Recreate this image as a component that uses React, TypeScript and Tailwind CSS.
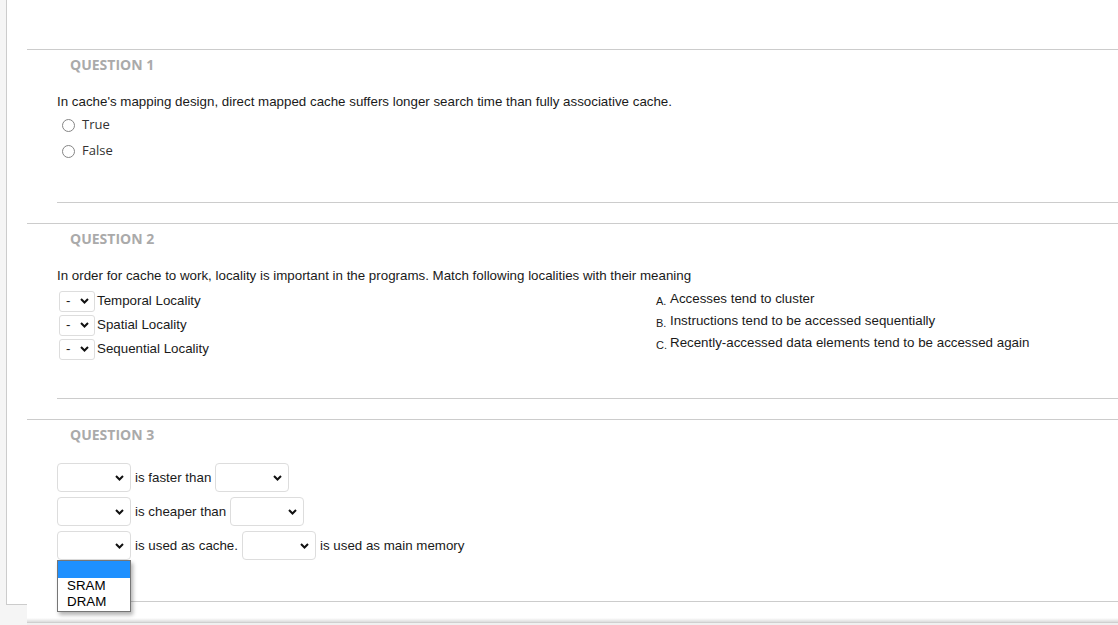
import type { ReactNode } from "react";

const arial = "font-['Liberation_Sans',Arial,sans-serif]";
const openSans = "font-['Open_Sans',sans-serif]";

export default function App() {
  return (
    <div className="flex h-[625px] overflow-hidden bg-[#f5f5f5]">
      <div className="ml-[6px] h-[605px] w-[21px] shrink-0 border-b border-l border-[#cccccc] bg-white" />
      <div className="flex min-w-0 flex-1 flex-col">
        <div className="h-[618px] bg-white pt-[49px]">
          <QuestionBlock title="QUESTION 1" contentClass="pb-[38px]">
            <p className={`mt-[19px] text-[13.33px] leading-[16px] text-[#1a1a1a] ${arial}`}>
              In cache's mapping design, direct mapped cache suffers longer search time than fully associative cache.
            </p>
            <div className="mt-[2px]">
              <Radio label="True" />
              <Radio label="False" />
            </div>
          </QuestionBlock>

          <QuestionBlock title="QUESTION 2" contentClass="pb-[37px]" className="mt-[20px]">
            <p className={`mt-[19px] text-[13.33px] leading-[16px] text-[#1a1a1a] ${arial}`}>
              In order for cache to work, locality is important in the programs. Match following localities with their
              meaning
            </p>
            <div className="mt-[4px] flex">
              <div className="ml-[2px] w-[597px] pt-[1px]">
                <MatchRow label="Temporal Locality" />
                <MatchRow label="Spatial Locality" />
                <MatchRow label="Sequential Locality" />
              </div>
              <div>
                <Answer letter="A." text="Accesses tend to cluster" />
                <Answer letter="B." text="Instructions tend to be accessed sequentially" />
                <Answer letter="C." text="Recently-accessed data elements tend to be accessed again" />
              </div>
            </div>
          </QuestionBlock>

          <QuestionBlock title="QUESTION 3" contentClass="pb-[41px]" className="mt-[20px]">
            <div className={`mt-[18px] flex flex-col gap-[5px] text-[13.33px] text-[#1a1a1a] ${arial}`}>
              <div className="flex items-center gap-[4px]">
                <Select />
                <span>is faster than</span>
                <Select />
              </div>
              <div className="flex items-center gap-[4px]">
                <Select />
                <span>is cheaper than</span>
                <Select />
              </div>
              <div className="flex items-center gap-[4px]">
                <div className="relative">
                  <Select />
                  <div className="absolute left-0 top-full z-10 w-[74px] border border-[#767676] bg-white shadow-[2px_3px_4px_rgba(0,0,0,0.3)]">
                    <div className="h-[17px] bg-[#1e90ff]" />
                    <div className="h-[16px] pl-[9px] leading-[16px] text-black">SRAM</div>
                    <div className="h-[17px] pl-[9px] leading-[16px] text-black">DRAM</div>
                  </div>
                </div>
                <span>is used as cache.</span>
                <Select />
                <span>is used as main memory</span>
              </div>
            </div>
          </QuestionBlock>
        </div>
        <div className="h-[4px] bg-gradient-to-b from-white to-[#dcdcdc]" />
        <div className="h-[1px] bg-[#cfcfcf]" />
        <div className="flex-1 bg-[#f0f0f0]" />
      </div>
    </div>
  );
}

function QuestionBlock({
  title,
  children,
  contentClass,
  className = "",
}: {
  title: string;
  children: ReactNode;
  contentClass: string;
  className?: string;
}) {
  return (
    <section className={`border-t border-[#cccccc] pt-[5px] ${className}`}>
      <h3 className={`pl-[43px] text-[14px] font-bold leading-[20px] text-[#aaaaaa] ${openSans}`}>{title}</h3>
      <div className={`ml-[30px] border-b border-[#cccccc] ${contentClass}`}>{children}</div>
    </section>
  );
}

function Radio({ label }: { label: string }) {
  return (
    <label className={`flex h-[26px] items-center text-[13px] text-[#333333] ${openSans}`}>
      <span className="ml-[5px] mr-[7px] h-[13px] w-[13px] rounded-full border border-[#858585] bg-white" />
      {label}
    </label>
  );
}

function Chevron() {
  return (
    <svg width="9" height="6" viewBox="0 0 9 6" className="shrink-0">
      <path d="M1 1l3.5 3.5L8 1" fill="none" stroke="#111" strokeWidth="2" />
    </svg>
  );
}

function MatchRow({ label }: { label: string }) {
  return (
    <div className={`flex h-[24px] items-center gap-[2px] text-[13.33px] text-[#1a1a1a] ${arial}`}>
      <div className="flex h-[21px] w-[36px] items-center justify-between rounded-[3px] border border-[#dddddd] bg-white pl-[6px] pr-[5px]">
        <span>-</span>
        <Chevron />
      </div>
      <span>{label}</span>
    </div>
  );
}

function Answer({ letter, text }: { letter: string; text: string }) {
  return (
    <div className={`flex h-[22px] items-center text-[13.33px] text-[#1a1a1a] ${arial}`}>
      <span className="mt-[4px] w-[14px] text-[11px]">{letter}</span>
      <span>{text}</span>
    </div>
  );
}

function Select() {
  return (
    <div className="flex h-[29px] w-[74px] items-center justify-end rounded-[4px] border border-[#dddddd] bg-white pr-[6px]">
      <Chevron />
    </div>
  );
}
